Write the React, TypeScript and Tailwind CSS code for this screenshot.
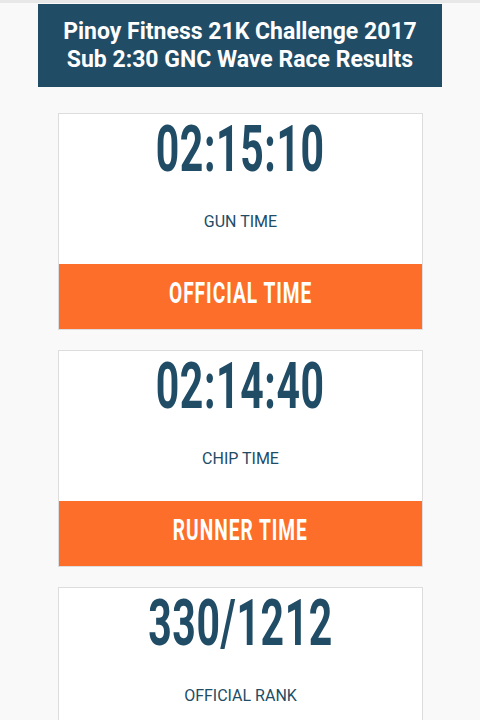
// Race results card stack

const navy = 'text-[#214c66]'

type Result = { value: string; label: string; banner?: string }

const results: Result[] = [
  { value: '02:15:10', label: 'GUN TIME', banner: 'OFFICIAL TIME' },
  { value: '02:14:40', label: 'CHIP TIME', banner: 'RUNNER TIME' },
  { value: '330/1212', label: 'OFFICIAL RANK' },
]

function ResultCard({ r }: { r: Result }) {
  return (
    <div className="border border-[#dddddd] bg-white">
      <div className="flex flex-col items-center pb-[32px]">
        <span className={`inline-block ${navy} font-bold text-[65px] leading-[70px] tracking-[1px] scale-x-[0.63]`}>
          {r.value}
        </span>
        <span className={`${navy} text-[16px] mt-[28px] leading-[20px]`}>{r.label}</span>
      </div>
      {r.banner && (
        <div className="bg-[#fd6e2a] h-[65px] flex items-center justify-center pb-[5px]">
          <span className="inline-block text-white font-bold text-[29px] tracking-[1.5px] scale-x-[0.66]">
            {r.banner}
          </span>
        </div>
      )}
    </div>
  )
}

export default function App() {
  return (
    <div
      className="min-h-[720px] bg-[#f9f9f9] border-t-[3px] border-[#e8e8e8] pt-px"
      style={{ fontFamily: 'Roboto, "Liberation Sans", sans-serif' }}
    >
      <div className="mx-[38px] bg-[#214c66] h-[83px] flex flex-col items-center justify-center text-white font-bold text-[23px] leading-[28px]">
        <div>Pinoy Fitness 21K Challenge 2017</div>
        <div>Sub 2:30 GNC Wave Race Results</div>
      </div>
      <div className="ml-[58px] mr-[57px] mt-[26px] flex flex-col gap-[20px]">
        {results.map((r) => (
          <ResultCard key={r.value} r={r} />
        ))}
      </div>
    </div>
  )
}
